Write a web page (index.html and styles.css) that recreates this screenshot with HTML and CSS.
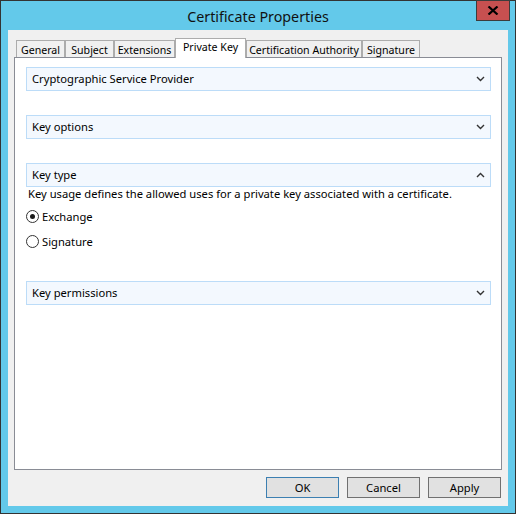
FILE: index.html
```html
<!DOCTYPE html>
<html lang="en">
<head>
<meta charset="utf-8">
<title>Certificate Properties</title>
<link rel="stylesheet" href="styles.css">
</head>
<body>
<div class="window">
  <div class="titlebar">
    <span class="title">Certificate Properties</span>
    <button class="close" type="button" aria-label="Close">
      <svg width="12" height="9" viewBox="0 0 12 9" aria-hidden="true">
        <path d="M1.5 0.5 L10.5 8.5 M10.5 0.5 L1.5 8.5" stroke="#000" stroke-width="2.2" fill="none"/>
      </svg>
    </button>
  </div>

  <div class="client">
    <div class="tabs">
      <div class="tab tab-general">General</div>
      <div class="tab tab-subject">Subject</div>
      <div class="tab tab-extensions">Extensions</div>
      <div class="tab tab-private is-active">Private Key</div>
      <div class="tab tab-authority">Certification Authority</div>
      <div class="tab tab-signature">Signature</div>
    </div>

    <div class="panel">
      <section class="group">
        <div class="group-header">
          <span>Cryptographic Service Provider</span>
          <svg class="chevron" width="9" height="6" viewBox="0 0 9 6"><polyline points="1,1 4.5,4.5 8,1"/></svg>
        </div>
      </section>

      <section class="group">
        <div class="group-header">
          <span>Key options</span>
          <svg class="chevron" width="9" height="6" viewBox="0 0 9 6"><polyline points="1,1 4.5,4.5 8,1"/></svg>
        </div>
      </section>

      <section class="group is-open">
        <div class="group-header">
          <span>Key type</span>
          <svg class="chevron" width="9" height="6" viewBox="0 0 9 6"><polyline points="1,5 4.5,1.5 8,5"/></svg>
        </div>
        <p class="group-text">Key usage defines the allowed uses for a private key associated with a certificate.</p>
        <label class="radio radio-first"><span class="radio-dot is-checked"></span>Exchange</label>
        <label class="radio"><span class="radio-dot"></span>Signature</label>
      </section>

      <section class="group">
        <div class="group-header">
          <span>Key permissions</span>
          <svg class="chevron" width="9" height="6" viewBox="0 0 9 6"><polyline points="1,1 4.5,4.5 8,1"/></svg>
        </div>
      </section>
    </div>

    <div class="buttons">
      <button class="btn btn-default" type="button">OK</button>
      <button class="btn" type="button">Cancel</button>
      <button class="btn" type="button">Apply</button>
    </div>
  </div>
</div>
</body>
</html>
```

FILE: styles.css
```css
* {
  box-sizing: border-box;
}

html, body {
  margin: 0;
  padding: 0;
  background: #ffffff;
}

body {
  font-family: "Noto Sans", "Open Sans", sans-serif;
  font-size: 11.2px;
  color: #000;
}

/* window frame */
.window {
  position: relative;
  width: 516px;
  height: 514px;
  border: 1px solid #333333;
  background: #63c9ea;
  padding: 0 7px 7px 7px;
  display: flex;
  flex-direction: column;
}

.titlebar {
  height: 29px;
  display: flex;
  align-items: center;
  justify-content: center;
}

.title {
  font-size: 14.3px;
  color: #111;
  padding-top: 1px;
}

.close {
  position: absolute;
  top: -1px;
  left: 475px;
  width: 34px;
  height: 21px;
  margin: 0;
  padding: 0;
  border: 1px solid #3c3c3c;
  background: #c75050;
  display: flex;
  align-items: center;
  justify-content: center;
}

/* dialog client area */
.client {
  height: 476px;
  background: #f0f0f0;
  padding: 8px 6px 0 6px;
  display: flex;
  flex-direction: column;
}

/* tab strip */
.tabs {
  height: 19px;
  display: flex;
  align-items: flex-end;
  padding-left: 2px;
}

.tab {
  height: 17px;
  border: 1px solid #acacac;
  border-bottom: none;
  background: #f0f0f0;
  font-size: 10.6px;
  text-align: center;
  line-height: 18px;
  white-space: nowrap;
  overflow: hidden;
}

.tab.is-active {
  position: relative;
  z-index: 1;
  height: 20px;
  margin-bottom: -1px;
  background: #ffffff;
  line-height: 17px;
}

.tab-general { width: 49px; }
.tab-subject { width: 49px; }
.tab-extensions { width: 61px; }
.tab-private { width: 71px; }
.tab-authority { width: 116px; }
.tab-signature { width: 58px; }

/* tab page */
.panel {
  height: 413px;
  border: 1px solid #898c95;
  background: #ffffff;
  padding: 9px 10px 0 11px;
}

.group {
  margin-bottom: 24px;
}

.group.is-open {
  margin-bottom: 32px;
}

.group-header {
  height: 24px;
  border: 1px solid #bcdcf8;
  background: #f3f8fe;
  display: flex;
  align-items: center;
  justify-content: space-between;
  padding: 0 5px 1px 5px;
}

.chevron {
  fill: none;
  stroke: #333;
  stroke-width: 1.4;
}

.group-text {
  margin: 0;
  padding-left: 2px;
  line-height: 14px;
  white-space: nowrap;
}

.radio {
  display: flex;
  align-items: center;
  height: 16px;
  margin-top: 9px;
}

.radio.radio-first {
  margin-top: 7px;
}

.radio-dot {
  width: 13px;
  height: 13px;
  border: 1px solid #333;
  border-radius: 50%;
  background: #fff;
  margin-right: 3px;
  display: flex;
  align-items: center;
  justify-content: center;
}

.radio-dot.is-checked::after {
  content: "";
  width: 5px;
  height: 5px;
  border-radius: 50%;
  background: #1a1a1a;
}

/* dialog buttons */
.buttons {
  margin-top: 7px;
  display: flex;
  justify-content: flex-end;
  gap: 8px;
  padding-right: 1px;
}

.btn {
  width: 73px;
  height: 21px;
  margin: 0;
  padding: 0;
  border: 1px solid #707070;
  background: #e1e1e1;
  font-family: inherit;
  font-size: 11.2px;
  color: #000;
}

.btn-default {
  border-color: #3c7fb1;
}
```
